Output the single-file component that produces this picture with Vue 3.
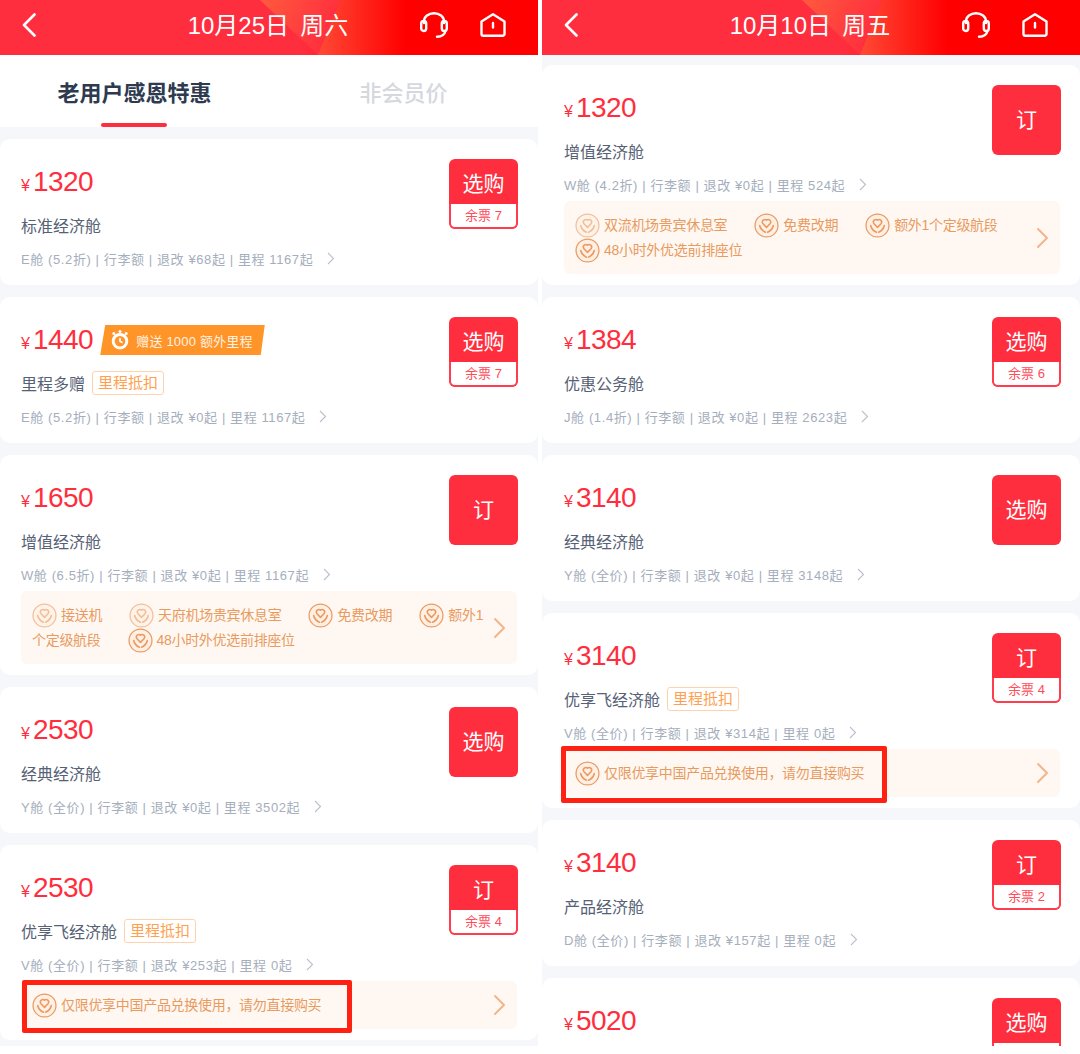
<template>
  <div class="page">
    <section v-for="panel in panels" :key="panel.title" class="panel">
      <header class="topbar">
        <svg class="back" width="14" height="24" viewBox="0 0 14 24" fill="none">
          <path d="M12.5 1.5 2 12l10.500 10.500" stroke="#fff" stroke-width="2.600" stroke-linecap="round" stroke-linejoin="round" />
        </svg>
        <h1 class="title">{{ panel.title }}</h1>
        <div class="top-icons">
          <svg width="28" height="26" viewBox="0 0 28 26" fill="none" stroke="#fff" stroke-width="2.400" stroke-linecap="round">
            <path d="M4 11V9.500C4 4.500 8.500 1.200 14 1.200s10 3.300 10 8.300V11" />
            <rect x="1.200" y="9" width="5" height="10" rx="2.500" />
            <rect x="21.800" y="9" width="5" height="10" rx="2.500" />
            <path d="M25.500 19c-.8 3.600-4.500 5.600-8.500 5.800" />
          </svg>
          <svg width="26" height="24" viewBox="0 0 26 24" fill="none" stroke="#fff" stroke-width="2.400" stroke-linecap="round" stroke-linejoin="round">
            <path d="M1.500 8.500 13 1.300l11.500 7.200V21a1.800 1.800 0 0 1-1.800 1.800H3.300A1.800 1.800 0 0 1 1.500 21z" />
            <path d="M13 10v4.500" />
          </svg>
        </div>
      </header>

      <nav v-if="panel.tabs" class="tabs">
        <div class="tab active">老用户感恩特惠</div>
        <div class="tab">非会员价</div>
      </nav>

      <div class="list" :class="{ 'with-tabs': panel.tabs }">
        <article v-for="(card, i) in panel.cards" :key="i" class="card">
          <div class="card-top">
            <div class="info">
              <div class="price-row">
                <span class="yen">¥</span><span class="price">{{ card.price }}</span>
                <span v-if="card.bonus" class="bonus">
                  <svg width="20" height="20" viewBox="0 0 20 20" fill="none">
                    <circle cx="10" cy="11.200" r="6.800" stroke="#fff" stroke-width="3" />
                    <circle cx="3.800" cy="3.400" r="1.500" fill="#fff" />
                    <circle cx="10" cy="1.600" r="1.500" fill="#fff" />
                    <circle cx="16.200" cy="3.400" r="1.500" fill="#fff" />
                    <path d="M10 8.500V11.200l2 1.300" stroke="#fff" stroke-width="1.600" stroke-linecap="round" />
                  </svg>
                  {{ card.bonus }}
                </span>
              </div>
              <div v-if="card.name" class="name-row">
                <span class="name">{{ card.name }}</span>
                <span v-if="card.tag" class="tag">里程抵扣</span>
              </div>
              <div v-if="card.meta" class="meta">
                {{ card.meta }}
                <svg width="8" height="13" viewBox="0 0 8 13" fill="none">
                  <path d="M1 1l5.500 5.500L1 12" stroke="#b9c0cc" stroke-width="1.100" />
                </svg>
              </div>
            </div>
            <button class="buy" type="button">
              <span class="buy-label" :class="{ full: card.stock === undefined }">{{ card.action }}</span>
              <span v-if="card.stock !== undefined" class="buy-stock">{{ card.stock }}</span>
            </button>
          </div>

          <div v-if="card.perks" class="perks">
            <div class="perk-text">
              <span v-for="perk in card.perks" :key="perk.text" class="perk">
                <svg class="perk-icon" :class="{ faded: perk.faded }" viewBox="0 0 24 24" fill="none" stroke="#ea9a63" stroke-width="1.200" stroke-linecap="round" stroke-linejoin="round">
                  <circle cx="12" cy="12" r="11" fill="#fff0e3" />
                  <path d="M12 13.800 8.400 10a2.400 2.400 0 0 1 3.600-3.100A2.400 2.400 0 0 1 15.600 10z" stroke-width="1.500" />
                  <path d="M5.500 12c.5 3 2.500 5 5.500 6.500M18.500 12c-.5 3-2.500 5-5.500 6.500" stroke-width="1.500" />
                </svg>{{ perk.text }}
              </span>
            </div>
            <svg class="perk-arrow" width="13" height="22" viewBox="0 0 13 22" fill="none">
              <path d="M2 2l9 9-9 9" stroke="#f4b48a" stroke-width="2" stroke-linecap="round" stroke-linejoin="round" />
            </svg>
            <div v-if="card.marked" class="marker"></div>
          </div>
        </article>
      </div>
    </section>
  </div>
</template>

<script setup>
const onlyRedeem = [{ text: '仅限优享中国产品兑换使用，请勿直接购买' }]

const panels = [
  {
    title: '10月25日  周六',
    tabs: true,
    cards: [
      { price: 1320, name: '标准经济舱', meta: 'E舱 (5.2折) | 行李额 | 退改 ¥68起 | 里程 1167起', action: '选购', stock: '余票 7' },
      { price: 1440, bonus: '赠送 1000 额外里程', name: '里程多赠', tag: true, meta: 'E舱 (5.2折) | 行李额 | 退改 ¥0起 | 里程 1167起', action: '选购', stock: '余票 7' },
      {
        price: 1650,
        name: '增值经济舱',
        meta: 'W舱 (6.5折) | 行李额 | 退改 ¥0起 | 里程 1167起',
        action: '订',
        perks: [
          { text: '接送机', faded: true },
          { text: '天府机场贵宾休息室', faded: true },
          { text: '免费改期' },
          { text: '额外1个定级航段' },
          { text: '48小时外优选前排座位' }
        ]
      },
      { price: 2530, name: '经典经济舱', meta: 'Y舱 (全价) | 行李额 | 退改 ¥0起 | 里程 3502起', action: '选购' },
      { price: 2530, name: '优享飞经济舱', tag: true, meta: 'V舱 (全价) | 行李额 | 退改 ¥253起 | 里程 0起', action: '订', stock: '余票 4', perks: onlyRedeem, marked: true }
    ]
  },
  {
    title: '10月10日  周五',
    tabs: false,
    cards: [
      {
        price: 1320,
        name: '增值经济舱',
        meta: 'W舱 (4.2折) | 行李额 | 退改 ¥0起 | 里程 524起',
        action: '订',
        perks: [
          { text: '双流机场贵宾休息室', faded: true },
          { text: '免费改期' },
          { text: '额外1个定级航段' },
          { text: '48小时外优选前排座位' }
        ]
      },
      { price: 1384, name: '优惠公务舱', meta: 'J舱 (1.4折) | 行李额 | 退改 ¥0起 | 里程 2623起', action: '选购', stock: '余票 6' },
      { price: 3140, name: '经典经济舱', meta: 'Y舱 (全价) | 行李额 | 退改 ¥0起 | 里程 3148起', action: '选购' },
      { price: 3140, name: '优享飞经济舱', tag: true, meta: 'V舱 (全价) | 行李额 | 退改 ¥314起 | 里程 0起', action: '订', stock: '余票 4', perks: onlyRedeem, marked: true },
      { price: 3140, name: '产品经济舱', meta: 'D舱 (全价) | 行李额 | 退改 ¥157起 | 里程 0起', action: '订', stock: '余票 2' },
      { price: 5020, action: '选购', stock: '' }
    ]
  }
]
</script>

<style scoped>
.page {
  display: grid;
  grid-template-columns: 538px 538px;
  gap: 4px;
  width: 1080px;
  height: 1054px;
  background: #fff;
  font-family: "Liberation Sans", "Noto Sans CJK SC", sans-serif;
}

.panel {
  height: 1046px;
  overflow: hidden;
  background: #f5f7fb;
}

.topbar {
  position: relative;
  display: grid;
  grid-template-columns: 1fr auto 1fr;
  align-items: center;
  height: 55px;
  padding: 0 32px 5px 22px;
  box-sizing: border-box;
  overflow: hidden;
  background: linear-gradient(90deg, #ff2e3e 0, #ff2e3e 300px, #ff0000 410px);
}

.topbar::before {
  content: "";
  position: absolute;
  inset: 0;
  background: linear-gradient(115deg, #ff5a3e 235px, #ff2e3e 315px);
  clip-path: polygon(260px 0, 340px 0, 318px 55px);
}

.topbar::after {
  content: "";
  position: absolute;
  inset: 0;
  background: linear-gradient(90deg, #ff4c38 315px, #ff0000 405px);
  clip-path: polygon(340px 0, 420px 0, 420px 55px, 318px 55px);
}

.back,
.title,
.top-icons {
  position: relative;
  z-index: 1;
}

.title {
  margin: 0 0 3px 8px;
  color: #fff;
  font-size: 24px;
  font-weight: 400;
  word-spacing: -1px;
  white-space: pre;
}

.top-icons {
  display: flex;
  align-items: center;
  justify-content: flex-end;
  gap: 32px;
}

.tabs {
  display: grid;
  grid-template-columns: 1fr 1fr;
  height: 72px;
  background: #fff;
}

.tab {
  position: relative;
  display: flex;
  align-items: center;
  justify-content: center;
  color: #d5d8de;
  font-size: 22px;
  font-weight: 500;
}

.tab.active {
  color: #2e3a50;
  font-weight: 700;
}

.tab.active::after {
  content: "";
  position: absolute;
  bottom: 0;
  left: 50%;
  width: 66px;
  height: 4px;
  margin-left: -34px;
  border-radius: 2px;
  background: #ff2e3e;
}

.list {
  display: flex;
  flex-direction: column;
  gap: 12px;
  padding-top: 10px;
}

.list.with-tabs {
  padding-top: 12px;
}

.card {
  flex: none;
  padding: 20px 21px 15px;
  border-radius: 10px;
  background: #fff;
}

.panel:last-child .card {
  padding-right: 20px;
  padding-left: 22px;
}

.card-top {
  display: flex;
  align-items: flex-start;
  justify-content: space-between;
}

.price-row {
  display: flex;
  align-items: center;
  height: 46px;
  color: #ff2e3e;
}

.yen {
  margin: 8px 3px 0 0;
  font-size: 16px;
}

.price {
  font-size: 28px;
  letter-spacing: -0.5px;
}

.bonus {
  display: flex;
  align-items: center;
  gap: 6px;
  height: 30px;
  margin-left: 7px;
  padding: 0 12px 0 10px;
  background: #ff9428;
  clip-path: polygon(5px 0, 100% 0, calc(100% - 4px) 100%, 0 100%);
  color: #fff2e2;
  font-size: 13px;
  letter-spacing: 0.2px;
  white-space: nowrap;
}

.name-row {
  display: flex;
  align-items: center;
  gap: 7px;
  height: 39px;
}

.name {
  color: #566175;
  font-size: 16px;
}

.tag {
  padding: 1px 5px;
  border: 1px solid #ffd2ad;
  border-radius: 3px;
  color: #ff9f50;
  font-size: 15px;
  line-height: 20px;
}

.meta {
  display: flex;
  align-items: center;
  gap: 14px;
  height: 24px;
  margin-top: 2px;
  color: #a5aebc;
  font-size: 13px;
  letter-spacing: 0.6px;
  white-space: nowrap;
}

.buy {
  display: flex;
  flex-direction: column;
  flex: none;
  width: 69px;
  height: 70px;
  margin-right: -1px;
  padding: 0;
  overflow: hidden;
  border: 0;
  border-radius: 6px;
  background: #ff2e3e;
  color: #fff;
  font-family: inherit;
}

.buy-label {
  display: flex;
  flex: 1;
  align-items: center;
  justify-content: center;
  font-size: 21px;
}

.buy-label.full {
  padding-bottom: 5px;
}

.buy-stock {
  height: 25px;
  box-sizing: border-box;
  border: 2px solid #ff3d4c;
  border-top: 0;
  border-radius: 0 0 6px 6px;
  background: #fff;
  color: #ff4a58;
  font-size: 13px;
  line-height: 24px;
  text-align: center;
}

.perks {
  position: relative;
  display: flex;
  align-items: center;
  gap: 4px;
  margin: 5px 0 -4px;
  padding: 0 11px;
  border-radius: 6px;
  background: #fff8f2;
}

.perk-text {
  flex: 1;
  padding: 12px 0 11px;
  color: #e99a5f;
  font-size: 14px;
  letter-spacing: -0.3px;
  line-height: 25px;
}

.perk {
  margin-right: 27px;
}

.perk-icon {
  display: inline-block;
  width: 25px;
  height: 25px;
  margin-right: 4px;
  vertical-align: top;
}

.perk-icon.faded {
  opacity: 0.6;
}

.perk-arrow {
  flex: none;
}

.marker {
  position: absolute;
  top: -3px;
  left: -3px;
  width: 326px;
  height: 57px;
  box-sizing: border-box;
  border: 5px solid #ff2112;
  border-radius: 2px;
}

.panel:first-child .marker {
  top: -1px;
  left: 1px;
  width: 330px;
  height: 53px;
}
</style>

<style>
html,
body {
  background: #fff;
}
</style>
